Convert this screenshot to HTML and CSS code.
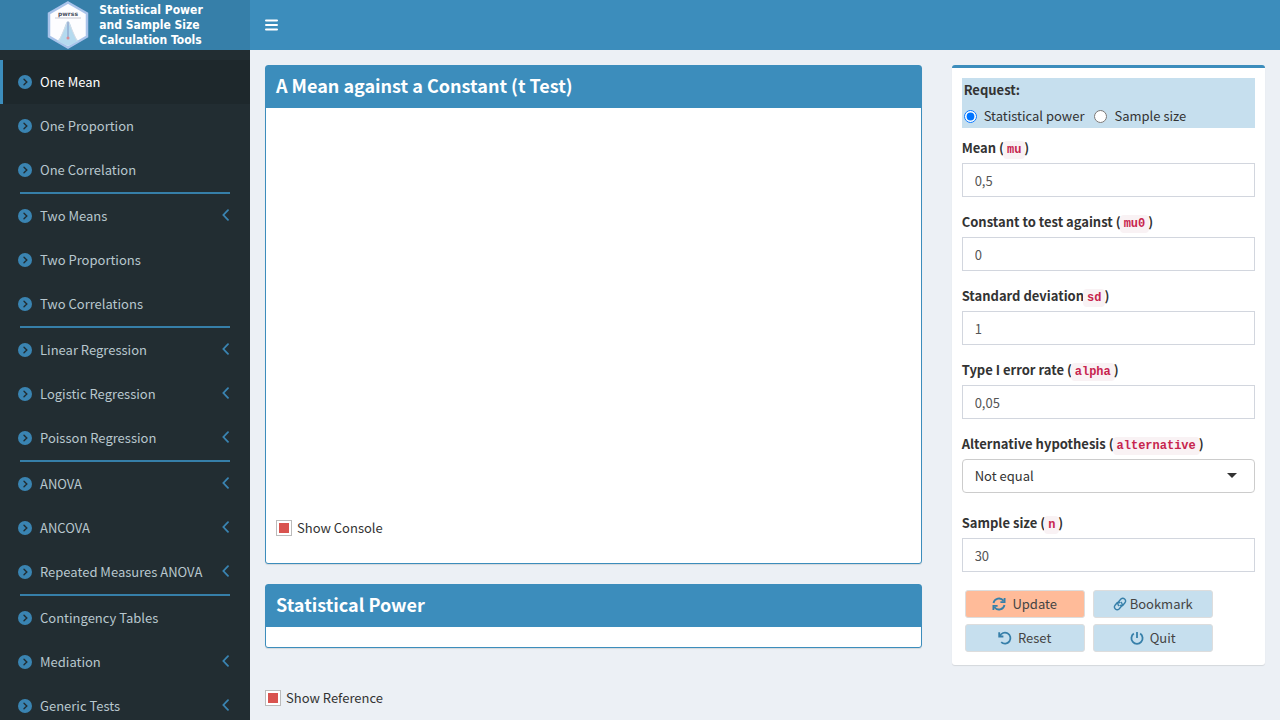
FILE: index.html
```html
<!DOCTYPE html>
<html lang="en">

<head>
    <meta charset="UTF-8">
    <meta name="viewport" content="width=device-width, initial-scale=1.0">
    <title>Statistical Power and Sample Size Calculation Tools</title>
    <link rel="stylesheet" href="styles.css">
</head>

<body>
    <!-- Icons used more than once -->
    <svg class="sprite" aria-hidden="true">
        <symbol id="circle-right" viewBox="0 0 14 14">
            <circle cx="7" cy="7" r="7" fill="#3a84b2" />
            <path d="M6 4.200 8.800 7 6 9.800" fill="none" stroke="#222d32" stroke-width="1.4" stroke-linecap="round" />
        </symbol>
        <symbol id="angle-left" viewBox="0 0 8 12">
            <path d="M6 1.200 1.400 6 6 10.800" fill="none" stroke="#3a84b2" stroke-width="1.8" stroke-linecap="round" />
        </symbol>
    </svg>

    <header class="header">
        <a href="#" class="logo">
            <svg width="42" height="48" viewBox="0 0 42 48" aria-hidden="true">
                <path d="M21 1.500 40 12.500v23L21 46.500 2 35.500v-23z" fill="#fdfdff" stroke="#a9c3ea" stroke-width="2.500" />
                <path d="M10 40c6-3 8-20 11-20s5 17 11 20L21 45z" fill="#b5daef" />
                <path d="M8 17h26" stroke="#c9c9d2" stroke-width="1" />
                <path d="M21 20 12 40M21 20l9 20" stroke="#d5dce6" stroke-width="1" />
                <path d="M21 21v15" stroke="#8296c4" stroke-width="1" />
                <circle cx="21" cy="37" r="1.500" fill="#d98a94" />
                <text x="21" y="15" class="logo-mark">pwrss</text>
            </svg>
            <span class="logo-text">Statistical Power<br>and Sample Size<br>Calculation Tools</span>
        </a>
        <nav class="navbar">
            <button type="button" class="toggle" aria-label="Toggle navigation">
                <svg width="13" height="12" viewBox="0 0 13 12">
                    <path d="M1 1.500h11M1 6h11M1 10.500h11" stroke="#fff" stroke-width="2" stroke-linecap="round" />
                </svg>
            </button>
        </nav>
    </header>

    <div class="wrapper">
        <aside class="sidebar">
            <ul class="menu">
                <li class="active"><a href="#"><svg class="dot"><use href="#circle-right" /></svg>One Mean</a></li>
                <li><a href="#"><svg class="dot"><use href="#circle-right" /></svg>One Proportion</a></li>
                <li><a href="#"><svg class="dot"><use href="#circle-right" /></svg>One Correlation</a></li>
            </ul>
            <hr>
            <ul class="menu">
                <li><a href="#"><svg class="dot"><use href="#circle-right" /></svg>Two Means<svg class="angle"><use href="#angle-left" /></svg></a></li>
                <li><a href="#"><svg class="dot"><use href="#circle-right" /></svg>Two Proportions</a></li>
                <li><a href="#"><svg class="dot"><use href="#circle-right" /></svg>Two Correlations</a></li>
            </ul>
            <hr>
            <ul class="menu">
                <li><a href="#"><svg class="dot"><use href="#circle-right" /></svg>Linear Regression<svg class="angle"><use href="#angle-left" /></svg></a></li>
                <li><a href="#"><svg class="dot"><use href="#circle-right" /></svg>Logistic Regression<svg class="angle"><use href="#angle-left" /></svg></a></li>
                <li><a href="#"><svg class="dot"><use href="#circle-right" /></svg>Poisson Regression<svg class="angle"><use href="#angle-left" /></svg></a></li>
            </ul>
            <hr>
            <ul class="menu">
                <li><a href="#"><svg class="dot"><use href="#circle-right" /></svg>ANOVA<svg class="angle"><use href="#angle-left" /></svg></a></li>
                <li><a href="#"><svg class="dot"><use href="#circle-right" /></svg>ANCOVA<svg class="angle"><use href="#angle-left" /></svg></a></li>
                <li><a href="#"><svg class="dot"><use href="#circle-right" /></svg>Repeated Measures ANOVA<svg class="angle"><use href="#angle-left" /></svg></a></li>
            </ul>
            <hr>
            <ul class="menu">
                <li><a href="#"><svg class="dot"><use href="#circle-right" /></svg>Contingency Tables</a></li>
                <li><a href="#"><svg class="dot"><use href="#circle-right" /></svg>Mediation<svg class="angle"><use href="#angle-left" /></svg></a></li>
                <li><a href="#"><svg class="dot"><use href="#circle-right" /></svg>Generic Tests<svg class="angle"><use href="#angle-left" /></svg></a></li>
            </ul>
        </aside>

        <main class="content">
            <div class="results">
                <section class="box">
                    <h3>A Mean against a Constant (t Test)</h3>
                    <div class="box-body">
                        <div class="plot"></div>
                        <label class="check"><input type="checkbox" checked>Show Console</label>
                    </div>
                </section>
                <section class="box">
                    <h3>Statistical Power</h3>
                    <div class="box-body"></div>
                </section>
                <label class="check reference"><input type="checkbox" checked>Show Reference</label>
            </div>

            <div class="options">
                <form class="panel">
                    <fieldset class="request">
                        <legend>Request:</legend>
                        <div class="radios">
                            <label><input type="radio" name="request" checked>Statistical power</label>
                            <label><input type="radio" name="request">Sample size</label>
                        </div>
                    </fieldset>
                    <div class="field">
                        <label for="mu">Mean ( <code>mu</code> )</label>
                        <input type="text" id="mu" value="0,5">
                    </div>
                    <div class="field">
                        <label for="mu0">Constant to test against ( <code>mu0</code> )</label>
                        <input type="text" id="mu0" value="0">
                    </div>
                    <div class="field">
                        <label for="sd">Standard deviation <code>sd</code> )</label>
                        <input type="text" id="sd" value="1">
                    </div>
                    <div class="field">
                        <label for="alpha">Type I error rate ( <code>alpha</code> )</label>
                        <input type="text" id="alpha" value="0,05">
                    </div>
                    <div class="field field-select">
                        <label for="alternative">Alternative hypothesis ( <code>alternative</code> )</label>
                        <div class="select">
                            <select id="alternative">
                                <option>Not equal</option>
                                <option>Greater</option>
                                <option>Less</option>
                            </select>
                        </div>
                    </div>
                    <div class="field">
                        <label for="n">Sample size ( <code>n</code> )</label>
                        <input type="text" id="n" value="30">
                    </div>
                    <div class="buttons">
                        <button type="button" class="update">
                            <svg viewBox="0 0 14 14"><path d="M1.500 6A5.600 5.600 0 0 1 11.500 3.800M12.500 8A5.600 5.600 0 0 1 2.500 10.200M12.600 1v4.200H8.400M1.400 13V8.800h4.200" /></svg>
                            Update
                        </button>
                        <button type="button" class="bookmark">
                            <svg viewBox="0 0 14 14"><path d="M6.200 9C4.600 7.800 4.500 6 5.600 4.700L7.900 2.100c2.500-2.400 6.100.9 4 3.700L9.900 8.200c-.8.900-2.200.8-2.900-.3M7.800 5C9.400 6.200 9.500 8 8.400 9.300L6.100 11.900c-2.500 2.400-6.100-.9-4-3.700L4.100 5.800c.8-.9 2.200-.8 2.900.3" /></svg>
                            Bookmark
                        </button>
                        <button type="button">
                            <svg viewBox="0 0 14 14"><path d="M1.200 1.300v4.200h4.200M1.800 5.200A5.500 5.500 0 1 1 3.200 11.200" /></svg>
                            Reset
                        </button>
                        <button type="button">
                            <svg viewBox="0 0 14 14"><path d="M7 1v6M3.800 2.600a5.600 5.600 0 1 0 6.400 0" /></svg>
                            Quit
                        </button>
                    </div>
                </form>
            </div>
        </main>
    </div>
</body>

</html>
```
FILE: styles.css
```css
/* styles.css */
* {
    box-sizing: border-box;
}

body {
    font-family: "Source Sans Pro", "Noto Sans CJK SC", sans-serif;
    font-size: 13px;
    line-height: 20px;
    color: #333;
    background-color: #ecf0f5;
    margin: 0;
}

.sprite {
    display: none;
}

/* Header */
.header {
    display: flex;
    height: 50px;
}

.logo {
    display: flex;
    align-items: center;
    justify-content: center;
    gap: 10px;
    width: 250px;
    background-color: #367fa9;
    color: #fff;
    text-decoration: none;
}

.logo-text {
    font-family: "DejaVu Sans Condensed", "DejaVu Sans", sans-serif;
    font-size: 12px;
    font-weight: bold;
    line-height: 15px;
}

.logo-mark {
    font-family: "DejaVu Sans", sans-serif;
    font-size: 6px;
    font-weight: bold;
    text-anchor: middle;
    fill: #4a5260;
}

.navbar {
    flex: 1;
    display: flex;
    background-color: #3c8dbc;
}

.toggle {
    display: flex;
    align-items: center;
    padding: 0 15px;
    background: none;
    border: none;
    cursor: pointer;
}

.wrapper {
    display: flex;
    height: calc(100vh - 50px);
}

/* Sidebar */
.sidebar {
    width: 250px;
    flex-shrink: 0;
    padding-top: 10px;
    background-color: #222d32;
    overflow: hidden;
}

.sidebar hr {
    height: 2px;
    margin: 0 20px;
    border: none;
    background-color: #367fa9;
}

.menu {
    list-style: none;
    margin: 0;
    padding: 0;
}

.menu a {
    display: flex;
    align-items: center;
    height: 44px;
    padding: 0 20px 0 15px;
    border-left: 3px solid transparent;
    color: #b8c7ce;
    text-decoration: none;
}

.menu .active a {
    background-color: #1e282c;
    border-left-color: #3c8dbc;
    color: #fff;
}

.dot {
    width: 14px;
    height: 14px;
    margin-right: 8px;
}

.angle {
    width: 8px;
    height: 12px;
    margin-left: auto;
    margin-bottom: 2px;
}

/* Main area */
.content {
    flex: 1;
    display: flex;
    padding-top: 15px;
    overflow: hidden;
}

.results {
    width: 66.6667%;
    padding: 0 15px;
}

.options {
    width: 33.3333%;
    padding: 0 15px;
}

.box {
    margin-bottom: 20px;
    border: 1px solid #3c8dbc;
    border-radius: 3px;
    background-color: #fff;
    box-shadow: 0 1px 1px rgba(0, 0, 0, 0.1);
}

.box h3 {
    margin: 0;
    padding: 8px 10px 12px;
    background-color: #3c8dbc;
    color: #fff;
    font-size: 18px;
    line-height: 22px;
}

.box-body {
    padding: 10px;
}

.plot {
    height: 400px;
}

.check {
    display: flex;
    align-items: center;
    gap: 5px;
    margin-bottom: 15px;
}

.check input {
    appearance: none;
    width: 16px;
    height: 16px;
    margin: 0;
    padding: 2px;
    border: 1px solid #bbb;
    background-color: #fff;
}

.check input:checked {
    background: linear-gradient(#d9534f, #d9534f) content-box, #fff;
}

.reference {
    margin-top: 40px;
}

/* Options panel */
.panel {
    padding: 10px 10px 13px;
    border-top: 3px solid #3c8dbc;
    border-radius: 3px;
    background-color: #fff;
    box-shadow: 0 1px 1px rgba(0, 0, 0, 0.1);
}

.request {
    margin: 0 0 10px;
    padding: 2px;
    border: none;
    background-color: #c6dfee;
}

.request legend {
    float: left;
    width: 100%;
    margin-bottom: 6px;
    padding: 0;
    font-weight: bold;
}

.radios {
    display: flex;
    clear: both;
    gap: 10px;
}

.radios label {
    display: flex;
    align-items: center;
}

.radios input {
    margin: 0 7px 0 0;
}

.field {
    margin-bottom: 15px;
}

.field-select {
    margin-bottom: 20px;
}

.field label {
    display: block;
    margin-bottom: 5px;
    font-weight: bold;
}

.field code {
    margin: 0 -4px;
    padding: 2px 4px;
    border-radius: 4px;
    background-color: #f9f2f4;
    color: #c7254e;
    font-family: Consolas, "Liberation Mono", monospace;
    font-size: 12px;
    line-height: 1;
}

.field input,
.field select {
    display: block;
    width: 100%;
    height: 34px;
    padding: 0 12px;
    border: 1px solid #d2d6de;
    background-color: #fff;
    color: #555;
    font: inherit;
}

.field select {
    appearance: none;
    border-color: #ccc;
    border-radius: 4px;
    color: #333;
}

.select {
    position: relative;
}

.select::after {
    content: "";
    position: absolute;
    top: 14px;
    right: 18px;
    border: 5px solid transparent;
    border-top-color: #333;
    border-bottom: none;
}

.buttons {
    display: grid;
    grid-template-columns: 120px 120px;
    gap: 6px 8px;
    margin-top: 18px;
    padding-left: 3px;
}

.buttons button {
    display: flex;
    align-items: center;
    justify-content: center;
    gap: 6px;
    height: 28px;
    padding: 0;
    border: 1px solid #ddd;
    border-radius: 3px;
    background-color: #c6dfee;
    color: #444;
    font: inherit;
    cursor: pointer;
}

.buttons .update {
    background-color: #ffbb99;
}

.buttons .bookmark {
    gap: 3px;
}

.buttons svg {
    width: 14px;
    height: 14px;
    fill: none;
    stroke: #367fa9;
    stroke-width: 1.8;
}

.buttons .bookmark svg {
    stroke-width: 1.4;
}
```
